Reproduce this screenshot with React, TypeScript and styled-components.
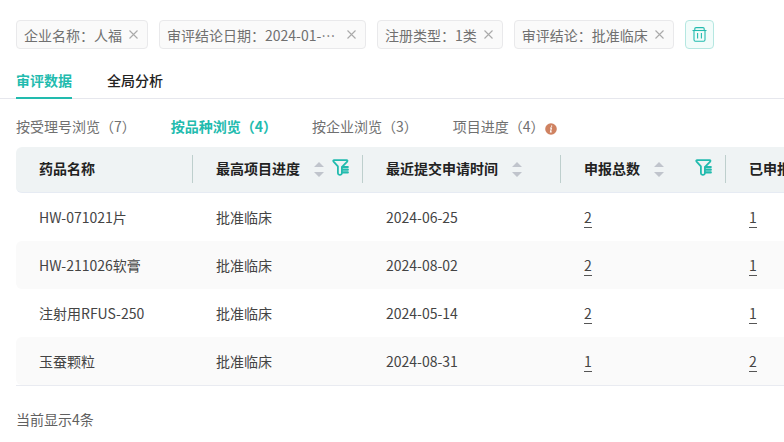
import React from "react";
import styled, { createGlobalStyle, css } from "styled-components";

const teal = "#22bbae";

const GlobalStyle = createGlobalStyle`
  *, *::before, *::after { box-sizing: border-box; }
  body {
    margin: 0;
    background: #fff;
    color: #444;
    font-family: "Noto Sans CJK SC", sans-serif;
    font-size: 14px;
    line-height: 24px;
    overflow-x: hidden;
  }
  button {
    margin: 0;
    padding: 0;
    border: 0;
    background: none;
    color: inherit;
    font: inherit;
    cursor: pointer;
  }
`;

const Page = styled.main`
  padding: 20px 0 8px;
`;

const FilterBar = styled.div`
  display: flex;
  gap: 11px;
  padding: 0 16px;
`;

const Tag = styled.span`
  display: inline-flex;
  align-items: center;
  gap: 6px;
  height: 29px;
  padding: 0 8px 0 7px;
  border: 1px solid #e9e9eb;
  border-radius: 4px;
  background: #fafafa;
  color: #707070;
  white-space: nowrap;
`;

const TagText = styled.span<{ $wide?: boolean }>`
  ${(p) => p.$wide && css`width: 173px;`}
`;

const TagClose = styled.button`
  display: flex;
  width: 11px;
  height: 11px;
  color: #aaa;
`;

const ClearButton = styled.button`
  display: inline-flex;
  align-items: center;
  justify-content: center;
  flex: none;
  width: 29px;
  height: 29px;
  border: 1px solid #b5e7e1;
  border-radius: 4px;
  background: #f2fcfa;
  color: ${teal};
`;

const MainTabs = styled.nav`
  display: flex;
  gap: 35px;
  margin-top: 16px;
  padding: 0 16px;
  box-shadow: inset 0 -1px #e6e7ed;
`;

const MainTab = styled.button<{ $active?: boolean }>`
  padding-bottom: 2px;
  border-bottom: 2px solid ${(p) => (p.$active ? teal : "transparent")};
  color: ${(p) => (p.$active ? teal : "#222")};
  font-weight: ${(p) => (p.$active ? 700 : 500)};
  line-height: 30px;
`;

const SubTabs = styled.nav`
  display: flex;
  gap: 35px;
  padding: 15px 16px 9px;
`;

const SubTab = styled.button<{ $active?: boolean }>`
  display: inline-flex;
  align-items: center;
  color: ${(p) => (p.$active ? teal : "#707070")};
  font-weight: ${(p) => (p.$active ? 700 : 400)};
  white-space: nowrap;
`;

const InfoIcon = styled.svg`
  align-self: flex-end;
  width: 12px;
  height: 12px;
  margin-bottom: 3px;
`;

const TableArea = styled.div`
  margin-left: 16px;
  overflow: hidden;
`;

const Table = styled.table`
  width: 100%;
  min-width: 960px;
  table-layout: fixed;
  border-collapse: separate;
  border-spacing: 0;
  border-bottom: 1px solid #e9ebf1;
`;

const Column = styled.col<{ $width?: number }>`
  ${(p) => p.$width && css`width: ${p.$width}px;`}
`;

const HeadCell = styled.th`
  height: 46px;
  padding: 0 0 2px;
  border-bottom: 1px solid #e6ebf3;
  background: #eff3f4;
  color: #222;
  font-weight: 700;
  text-align: left;
  &:first-child { border-radius: 6px 0 0 6px; }
`;

const HeadContent = styled.div`
  display: flex;
  align-items: center;
  height: 28px;
  padding: 0 13px 2px 23px;
  border-right: 1px solid #becfcd;
  white-space: nowrap;
`;

const SortButton = styled.button`
  display: flex;
  margin: 2px 0 0 14px;
  color: #c0c4cc;
`;

const FilterButton = styled.button`
  display: flex;
  margin-left: auto;
  color: ${teal};
`;

const BodyRow = styled.tr``;

const Cell = styled.td`
  height: 48px;
  padding: 0 23px;
  white-space: nowrap;
  &:first-child { border-radius: 6px 0 0 6px; }
  ${BodyRow}:nth-child(even) & { background: #fafafa; }
`;

const CountLink = styled.a`
  border-bottom: 1px solid #555;
  color: inherit;
  text-decoration: none;
`;

const Summary = styled.p`
  margin: 0;
  padding: 21px 16px 0;
  color: #606060;
`;

const CloseIcon = () => (
  <svg width="11" height="11" viewBox="0 0 11 11" fill="none" stroke="currentColor" strokeWidth="1.1">
    <path d="M1.5 1.5 9.5 9.5M9.5 1.5 1.5 9.5" />
  </svg>
);

const TrashIcon = () => (
  <svg width="15" height="15" viewBox="0 0 15 15" fill="none" stroke="currentColor" strokeWidth="1.1">
    <path d="M.5 3.5h14" />
    <path d="M2.8 3.5V1.8q0-1.2 1.2-1.2h7q1.2 0 1.2 1.2v1.7" />
    <path d="M2 4v8.8q0 1.4 1.4 1.4h8.2q1.4 0 1.4-1.4V4" />
    <path d="M5.6 6v5.4M9.4 6v5.4" />
  </svg>
);

const SortIcon = () => (
  <svg width="10" height="16" viewBox="0 0 10 16" fill="currentColor">
    <path d="M0 6 5 1l5 5zM0 11h10l-5 5z" />
  </svg>
);

const FunnelIcon = () => (
  <svg width="17" height="17" viewBox="0 0 17 17" fill="none" stroke="currentColor" strokeWidth="1.8" strokeLinejoin="round" strokeLinecap="round">
    <path d="M10.3 7.6 15.2 2.6Q16 1.2 14.6 1.2H2.2Q.6 1.2 1.6 2.6L5.9 7.4V14.3Q6 15.8 7.6 15.8H8.2Q9.8 15.8 9.9 14.2V8" />
    <path d="M10.6 8h5.2M10.4 10.7h5.4M10.4 13.4h5.4" strokeWidth="2.2" />
  </svg>
);

const tags = [
  { text: "企业名称：人福" },
  { text: "审评结论日期：2024-01-…", wide: true },
  { text: "注册类型：1类" },
  { text: "审评结论：批准临床" },
];

const columns = [
  { title: "药品名称", width: 177 },
  { title: "最高项目进度", width: 170, sort: true, filter: true },
  { title: "最近提交申请时间", width: 198, sort: true },
  { title: "申报总数", width: 165, sort: true, filter: true },
  { title: "已申报" },
];

const rows = [
  { name: "HW-071021片", stage: "批准临床", date: "2024-06-25", total: 2, filed: 1 },
  { name: "HW-211026软膏", stage: "批准临床", date: "2024-08-02", total: 2, filed: 1 },
  { name: "注射用RFUS-250", stage: "批准临床", date: "2024-05-14", total: 2, filed: 1 },
  { name: "玉蚕颗粒", stage: "批准临床", date: "2024-08-31", total: 1, filed: 2 },
];

export default function App() {
  return (
    <Page lang="zh-CN">
      <GlobalStyle />
      <FilterBar>
        {tags.map((tag) => (
          <Tag key={tag.text}>
            <TagText $wide={tag.wide}>{tag.text}</TagText>
            <TagClose aria-label="移除"><CloseIcon /></TagClose>
          </Tag>
        ))}
        <ClearButton aria-label="清空"><TrashIcon /></ClearButton>
      </FilterBar>

      <MainTabs>
        <MainTab $active>审评数据</MainTab>
        <MainTab>全局分析</MainTab>
      </MainTabs>

      <SubTabs>
        <SubTab>按受理号浏览（7）</SubTab>
        <SubTab $active>按品种浏览（4）</SubTab>
        <SubTab>按企业浏览（3）</SubTab>
        <SubTab>
          项目进度（4）
          <InfoIcon viewBox="0 0 12 12">
            <circle cx="6" cy="6" r="5.8" fill="#cf8261" />
            <path d="M5 5h1.4L5.5 8.9h1.2M6.6 2.6v1.1" fill="none" stroke="#fff" strokeWidth="1.1" />
          </InfoIcon>
        </SubTab>
      </SubTabs>

      <TableArea>
        <Table>
          <colgroup>
            {columns.map((c) => <Column key={c.title} $width={c.width} />)}
          </colgroup>
          <thead>
            <tr>
              {columns.map((c) => (
                <HeadCell key={c.title} scope="col">
                  <HeadContent>
                    {c.title}
                    {c.sort && <SortButton aria-label="排序"><SortIcon /></SortButton>}
                    {c.filter && <FilterButton aria-label="筛选"><FunnelIcon /></FilterButton>}
                  </HeadContent>
                </HeadCell>
              ))}
            </tr>
          </thead>
          <tbody>
            {rows.map((r) => (
              <BodyRow key={r.name}>
                <Cell>{r.name}</Cell>
                <Cell>{r.stage}</Cell>
                <Cell>{r.date}</Cell>
                <Cell><CountLink href="#total">{r.total}</CountLink></Cell>
                <Cell><CountLink href="#filed">{r.filed}</CountLink></Cell>
              </BodyRow>
            ))}
          </tbody>
        </Table>
      </TableArea>
      <Summary>当前显示4条</Summary>
    </Page>
  );
}
